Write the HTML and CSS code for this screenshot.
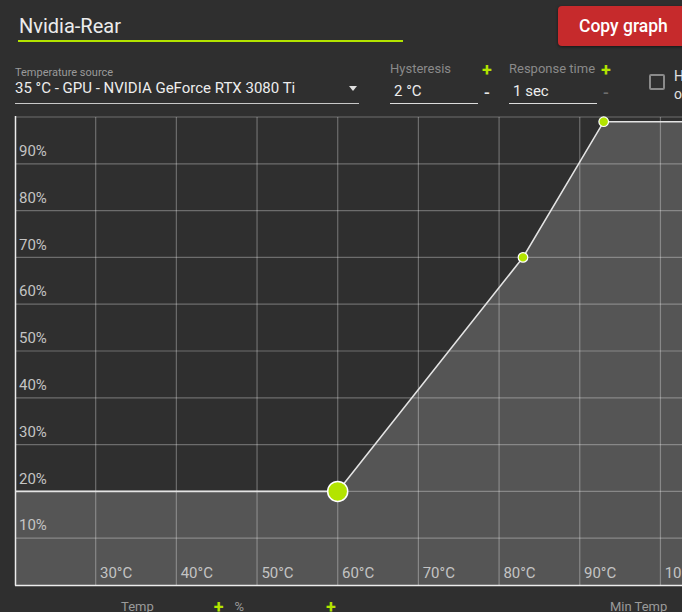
FILE: index.html
```html
<!DOCTYPE html>
<html>
<head>
<meta charset="utf-8">
<link rel="stylesheet" href="styles.css">
</head>
<body>
<div class="page">
  <div class="header">
    <div class="title">Nvidia-Rear</div>
    <button class="copy-btn">Copy graph</button>
  </div>
  <div class="controls">
    <div class="source">
      <div class="source-label">Temperature source</div>
      <div class="source-value"><span>35 °C - GPU - NVIDIA GeForce RTX 3080 Ti</span><span class="caret"></span></div>
    </div>
    <div class="field hyst">
      <div class="field-label">Hysteresis</div>
      <div class="field-value">2 °C</div>
    </div>
    <div class="steppers">
      <span class="plus">+</span>
      <span class="minus">-</span>
    </div>
    <div class="field resp">
      <div class="field-label">Response time</div>
      <div class="field-value">1 sec</div>
    </div>
    <div class="steppers">
      <span class="plus">+</span>
      <span class="minus disabled">-</span>
    </div>
    <div class="check">
      <span class="box"></span>
      <span class="check-text">Hide<br>overlay</span>
    </div>
  </div>
  <svg class="chart" width="682" height="472" viewBox="0 0 682 472">
    <rect x="15" y="1" width="700" height="468" fill="#2f2f2f"/>
    <polygon points="15,375.4 337.72,375.4 523,141.4 603.7,5.7 700,5.7 700,469 15,469" fill="#555555"/>
    <g stroke="rgba(255,255,255,0.3)" stroke-width="1.2">
      <line x1="15" y1="1" x2="700" y2="1"/>
      <line x1="15" y1="47.8" x2="700" y2="47.8"/>
      <line x1="15" y1="94.6" x2="700" y2="94.6"/>
      <line x1="15" y1="141.4" x2="700" y2="141.4"/>
      <line x1="15" y1="188.2" x2="700" y2="188.2"/>
      <line x1="15" y1="235" x2="700" y2="235"/>
      <line x1="15" y1="281.8" x2="700" y2="281.8"/>
      <line x1="15" y1="328.6" x2="700" y2="328.6"/>
      <line x1="15" y1="375.4" x2="700" y2="375.4"/>
      <line x1="15" y1="422.2" x2="700" y2="422.2"/>
      <line x1="95.68" y1="1" x2="95.68" y2="469"/>
      <line x1="176.36" y1="1" x2="176.36" y2="469"/>
      <line x1="257.04" y1="1" x2="257.04" y2="469"/>
      <line x1="337.72" y1="1" x2="337.72" y2="469"/>
      <line x1="418.4" y1="1" x2="418.4" y2="469"/>
      <line x1="499.08" y1="1" x2="499.08" y2="469"/>
      <line x1="579.76" y1="1" x2="579.76" y2="469"/>
      <line x1="660.44" y1="1" x2="660.44" y2="469"/>
    </g>
    <g class="axis-text">
      <text x="19" y="40">90%</text>
      <text x="19" y="86.8">80%</text>
      <text x="19" y="133.6">70%</text>
      <text x="19" y="180.4">60%</text>
      <text x="19" y="227.2">50%</text>
      <text x="19" y="274">40%</text>
      <text x="19" y="320.8">30%</text>
      <text x="19" y="367.6">20%</text>
      <text x="19" y="414.4">10%</text>
      <text x="100" y="462">30°C</text>
      <text x="180.7" y="462">40°C</text>
      <text x="261.4" y="462">50°C</text>
      <text x="342" y="462">60°C</text>
      <text x="422.7" y="462">70°C</text>
      <text x="503.4" y="462">80°C</text>
      <text x="584" y="462">90°C</text>
      <text x="664.7" y="462">100°C</text>
    </g>
    <line x1="15.5" y1="0" x2="15.5" y2="469.5" stroke="#ececec" stroke-width="1.5"/>
    <line x1="15" y1="469.5" x2="700" y2="469.5" stroke="#ececec" stroke-width="1.5"/>
    <polyline points="15,375.4 337.72,375.4 523,141.4 603.7,5.7 700,5.7" fill="none" stroke="#e4e4e4" stroke-width="1.6"/>
    <circle cx="337.72" cy="375.4" r="10" fill="#b3e400" stroke="#ffffff" stroke-width="1.5"/>
    <circle cx="523" cy="141.4" r="4.8" fill="#b3e400" stroke="#ffffff" stroke-width="1.2"/>
    <circle cx="603.7" cy="5.7" r="4.8" fill="#b3e400" stroke="#ffffff" stroke-width="1.2"/>
  </svg>
  <div class="footer">
    <span class="f-label f-temp">Temp</span>
    <span class="plus f-plus1">+</span>
    <span class="f-label f-pct">%</span>
    <span class="plus f-plus2">+</span>
    <span class="f-label f-min">Min Temp</span>
  </div>
</div>
</body>
</html>
```

FILE: styles.css
```css
html, body {
  margin: 0;
  padding: 0;
}
body {
  background: #2f2f2f;
  font-family: Roboto, "Liberation Sans", sans-serif;
  width: 682px;
  height: 612px;
  overflow: hidden;
}
.page {
  width: 682px;
  height: 612px;
  overflow: hidden;
}
.header {
  display: flex;
  align-items: flex-start;
  height: 46px;
  padding-top: 6px;
  box-sizing: border-box;
}
.title {
  flex: none;
  margin-left: 18px;
  width: 385px;
  height: 36px;
  box-sizing: border-box;
  padding-top: 8px;
  padding-left: 1px;
  font-size: 20px;
  line-height: 24px;
  color: #ececec;
  border-bottom: 2px solid #b3e400;
}
.copy-btn {
  margin-left: 155px;
  flex: none;
  width: 140px;
  height: 40px;
  border: none;
  border-radius: 4px;
  background: #c62a2c;
  color: #ffffff;
  font-family: Roboto, "Liberation Sans", sans-serif;
  font-size: 17.5px;
  font-weight: 500;
  text-align: left;
  padding: 0 0 0 21px;
  box-shadow: 0 1px 3px rgba(0,0,0,0.5);
}
.controls {
  display: flex;
  align-items: flex-start;
  height: 70px;
  padding-left: 15px;
  box-sizing: border-box;
}
.source {
  width: 344px;
  flex: none;
  padding-top: 20px;
}
.source-label {
  font-size: 11px;
  line-height: 13px;
  color: #9a9a9a;
}
.source-value {
  display: flex;
  justify-content: space-between;
  align-items: center;
  font-size: 15px;
  line-height: 19px;
  color: #ededed;
  padding-bottom: 5px;
  border-bottom: 1px solid #c8c8c8;
}
.caret {
  width: 0;
  height: 0;
  border-left: 4.5px solid transparent;
  border-right: 4.5px solid transparent;
  border-top: 5px solid #e0e0e0;
  margin-right: 2px;
}
.field {
  width: 88px;
  flex: none;
  padding-top: 15px;
}
.hyst {
  margin-left: 31px;
}
.resp {
  margin-left: 17px;
}
.field-label {
  font-size: 13px;
  line-height: 15px;
  color: #8a8a8a;
  white-space: nowrap;
}
.field-value {
  margin-top: 6px;
  padding-left: 4px;
  font-size: 15px;
  line-height: 18px;
  color: #ededed;
  padding-bottom: 3px;
  border-bottom: 1px solid #dcdcdc;
}
.steppers {
  display: flex;
  flex-direction: column;
  align-items: center;
  width: 10px;
  margin-left: 4px;
  padding-top: 14px;
  flex: none;
}
.plus {
  color: #b3e400;
  font-size: 18px;
  font-weight: 700;
  line-height: 20px;
}
.minus {
  margin-top: 3px;
  color: #e8e8e8;
  font-size: 17px;
  font-weight: 500;
  line-height: 18px;
}
.minus.disabled {
  color: #6e6e6e;
}
.check {
  display: flex;
  align-items: flex-start;
  margin-left: 38px;
  padding-top: 27px;
  flex: none;
}
.box {
  width: 12px;
  height: 12px;
  border: 2px solid #8a8a8a;
  border-radius: 2px;
  flex: none;
  margin-top: 1px;
}
.check-text {
  margin-left: 9px;
  margin-top: -6px;
  font-size: 14px;
  line-height: 18px;
  color: #e0e0e0;
  white-space: nowrap;
}
.chart {
  display: block;
}
.axis-text text {
  font-family: Roboto, "Liberation Sans", sans-serif;
  font-size: 15px;
  fill: #c4c4c4;
}
.footer {
  display: flex;
  align-items: flex-start;
  padding-top: 9px;
  height: 30px;
  box-sizing: border-box;
}
.f-label {
  font-size: 13px;
  line-height: 15px;
  margin-top: 2px;
  color: #9a9a9a;
}
.f-temp {
  margin-left: 121px;
}
.f-plus1 {
  margin-left: 60px;
}
.f-pct {
  margin-left: 11px;
}
.f-plus2 {
  margin-left: 82px;
}
.f-min {
  margin-left: 274px;
}
```
